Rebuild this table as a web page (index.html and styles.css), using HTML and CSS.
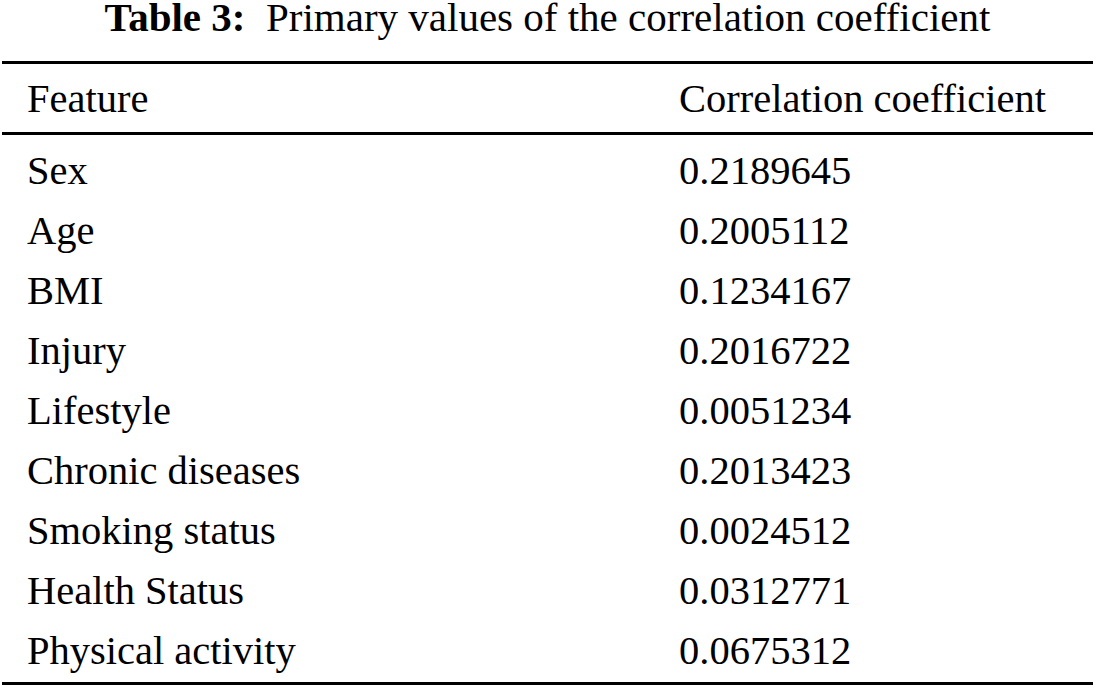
FILE: index.html
```html
<!DOCTYPE html>
<html>
<head>
<meta charset="utf-8">
<link rel="stylesheet" href="styles.css">
</head>
<body>
<div class="page">
  <p class="caption"><span class="label">Table 3:</span>&nbsp; Primary values of the correlation coefficient</p>
  <table class="data">
    <thead>
      <tr><th class="c1">Feature</th><th class="c2">Correlation coefficient</th></tr>
    </thead>
    <tbody>
      <tr class="first"><td class="c1">Sex</td><td class="c2">0.2189645</td></tr>
      <tr><td class="c1">Age</td><td class="c2">0.2005112</td></tr>
      <tr><td class="c1">BMI</td><td class="c2">0.1234167</td></tr>
      <tr><td class="c1">Injury</td><td class="c2">0.2016722</td></tr>
      <tr><td class="c1">Lifestyle</td><td class="c2">0.0051234</td></tr>
      <tr><td class="c1">Chronic diseases</td><td class="c2">0.2013423</td></tr>
      <tr><td class="c1">Smoking status</td><td class="c2">0.0024512</td></tr>
      <tr><td class="c1">Health Status</td><td class="c2">0.0312771</td></tr>
      <tr class="last"><td class="c1">Physical activity</td><td class="c2">0.0675312</td></tr>
    </tbody>
  </table>
</div>
</body>
</html>
```
FILE: styles.css
```css
html, body {
  margin: 0;
  padding: 0;
  background: #fff;
  font-family: "Liberation Serif", "Times New Roman", serif;
}
.page {
  width: 1095px;
  height: 688px;
  color: #000;
  overflow: hidden;
}
.caption {
  margin: -5px 0 22px 0;
  font-size: 41px;
  line-height: 44px;
  text-align: center;
  white-space: nowrap;
}
.caption .label {
  font-weight: bold;
}
.data {
  margin: 0 2px;
  width: 1091px;
  border-collapse: collapse;
  font-size: 40.5px;
}
.data th, .data td {
  padding: 0;
  text-align: left;
  font-weight: normal;
  white-space: nowrap;
}
.data thead tr {
  border-top: 3px solid #000;
  border-bottom: 3px solid #000;
}
.data th {
  line-height: 64px;
  padding-top: 3px;
  padding-bottom: 1px;
}
.data td {
  line-height: 60px;
}
.data .first td {
  padding-top: 6px;
}
.data .last td {
  padding-bottom: 1px;
}
.data tbody tr.last {
  border-bottom: 3px solid #000;
}
.data .c1 {
  padding-left: 25px;
  width: 652px;
}
```
